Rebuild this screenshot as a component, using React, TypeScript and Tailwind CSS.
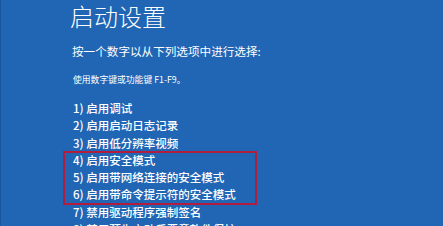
export default function App() {
  const items = [
    "1) 启用调试",
    "2) 启用启动日志记录",
    "3) 启用低分辨率视频",
    "4) 启用安全模式",
    "5) 启用带网络连接的安全模式",
    "6) 启用带命令提示符的安全模式",
    "7) 禁用驱动程序强制签名",
    "8) 禁用预先启动反恶意软件保护",
  ];

  return (
    <div
      className="w-[443px] h-[226px] overflow-hidden bg-[#2066b5] border-l border-[#1a55a0] text-white pl-[69px]"
      style={{ fontFamily: '"Noto Sans CJK SC", "Noto Sans", sans-serif' }}
    >
      <h1 className="text-[24px] leading-[32px] font-light">启动设置</h1>
      <p className="mt-[10px] text-[11.6px] leading-[18px] pl-[2px]">
        按一个数字以从下列选项中进行选择:
      </p>
      <p className="mt-[13px] text-[8.8px] leading-[13px] pl-[3px]">
        使用数字键或功能键 F1-F9。
      </p>
      <ul className="mt-[14px] pl-[3px] text-[11.5px] leading-[17.3px] font-medium">
        {items.slice(0, 3).map((t) => (
          <li key={t}>{t}</li>
        ))}
        <div className="relative">
          {items.slice(3, 6).map((t) => (
            <li key={t}>{t}</li>
          ))}
          <div className="absolute -left-[10px] top-[-1px] w-[194px] bottom-[-1px] border-2 border-[#b21d3d] pointer-events-none" />
        </div>
        {items.slice(6).map((t) => (
          <li key={t}>{t}</li>
        ))}
      </ul>
    </div>
  );
}
